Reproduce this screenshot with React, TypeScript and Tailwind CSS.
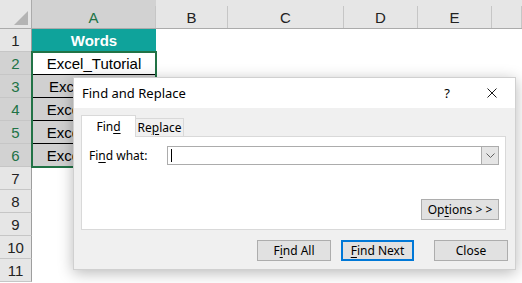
import * as React from "react";

const columns = [
  { label: "A", selected: true },
  { label: "B" },
  { label: "C" },
  { label: "D" },
  { label: "E" },
  { label: "" },
];

const rows = [1, 2, 3, 4, 5, 6, 7, 8, 9, 10, 11];

const words: Record<number, string> = {
  2: "Excel_Tutorial",
  3: "Excel Tutorial",
  4: "Excel_Tutorial",
  5: "Excel_Tutorial",
  6: "Excel_Tutorial",
};

function Ul({ children }: { children: React.ReactNode }) {
  return <span className="underline underline-offset-2">{children}</span>;
}

function DialogButton({
  children,
  focused,
  className,
}: {
  children: React.ReactNode;
  focused?: boolean;
  className?: string;
}) {
  return (
    <div
      className={
        "flex h-[21px] items-center justify-center bg-[#e1e1e1] " +
        (focused ? "border-2 border-[#0078d7] " : "border border-[#adadad] ") +
        (className ?? "")
      }
    >
      {children}
    </div>
  );
}

function FindReplaceDialog() {
  return (
    <div className="absolute left-[73px] top-[77px] flex h-[193px] w-[443px] flex-col border border-[#d0d0d0] bg-[#f0f0f0] font-['Noto_Sans',sans-serif] text-[12px] leading-none text-black shadow-[0_3px_14px_rgba(0,0,0,0.28)]">
      <div className="flex h-[30px] items-center bg-white pl-[8px]">
        <span className="text-[13px]">Find and Replace</span>
        <span className="ml-auto text-[13px]">?</span>
        <svg className="ml-[37px] mr-[18px]" width="10" height="10" viewBox="0 0 10 10">
          <path d="M0.5 0.5 L9.5 9.5 M9.5 0.5 L0.5 9.5" stroke="#1a1a1a" strokeWidth="1" fill="none" />
        </svg>
      </div>

      <div className="ml-[7px] mt-[7px] flex h-[21px] items-end">
        <div className="relative z-10 -mb-px flex h-[22px] w-[55px] items-center justify-center border border-b-0 border-[#d9d9d9] bg-white">
          Fin<Ul>d</Ul>
        </div>
        <div className="flex h-[18px] w-[48px] items-center justify-center border border-b-0 border-l-0 border-[#d9d9d9] bg-[#f0f0f0]">
          Re<Ul>p</Ul>lace
        </div>
      </div>

      <div className="ml-[7px] flex h-[94px] w-[425px] flex-col border border-[#d9d9d9] bg-white pl-[7px] pr-[6px]">
        <div className="mt-[9px] flex h-[19px] items-center">
          <span className="w-[78px]">
            Fi<Ul>n</Ul>d what:
          </span>
          <div className="flex h-[19px] flex-1 items-center border border-[#acacac] bg-white">
            <div className="ml-[3px] h-[13px] w-px bg-black" />
            <div className="ml-auto flex h-full w-[17px] items-center justify-center border-l border-[#acacac] bg-[#e5e5e5]">
              <svg width="9" height="5" viewBox="0 0 9 5">
                <path d="M0.5 0.5 L4.5 4.5 L8.5 0.5" stroke="#606060" strokeWidth="1" fill="none" />
              </svg>
            </div>
          </div>
        </div>
        <div className="mt-[34px] flex justify-end">
          <DialogButton className="w-[78px]">
            Op<Ul>t</Ul>ions &gt; &gt;
          </DialogButton>
        </div>
      </div>

      <div className="mt-[10px] flex justify-end pr-[7px]">
        <DialogButton className="w-[74px]">
          F<Ul>i</Ul>nd All
        </DialogButton>
        <DialogButton focused className="ml-[10px] w-[73px]">
          <Ul>F</Ul>ind Next
        </DialogButton>
        <DialogButton className="ml-[20px] w-[74px]">Close</DialogButton>
      </div>
    </div>
  );
}

export default function App() {
  return (
    <div className="relative h-[283px] w-[522px] overflow-hidden bg-white font-['Liberation_Sans',Arial,sans-serif] text-[15px] leading-none text-[#222]">
      <div className="grid grid-cols-[32px_124px_72px_116px_74px_74px_30px] grid-rows-[29px_repeat(11,23px)]">
        <div className="relative border-b border-r border-[#ababab] bg-[#e6e6e6]">
          <svg className="absolute bottom-[3px] right-[3px]" width="14" height="14" viewBox="0 0 14 14">
            <path d="M14 0 L14 14 L0 14 Z" fill="#b4b4b4" />
          </svg>
        </div>
        {columns.map((c, i) => (
          <div
            key={"h" + i}
            className={
              "flex items-end border-b border-[#ababab] " +
              (c.selected ? "bg-[#d2d2d2] text-[#217346]" : "bg-[#e6e6e6]")
            }
          >
            <div className="flex h-[22px] w-full items-center justify-center border-r border-[#c6c6c6]">
              {c.label}
            </div>
          </div>
        ))}

        {rows.map((r) => {
          const sel = r >= 2 && r <= 6;
          return (
            <React.Fragment key={r}>
              <div
                className={
                  "flex items-center justify-center border-b border-r border-b-[#c6c6c6] border-r-[#9e9e9e] " +
                  (sel ? "bg-[#d2d2d2] text-[#217346]" : "bg-[#e6e6e6]")
                }
              >
                {r}
              </div>
              {r === 1 ? (
                <div className="flex items-center justify-center bg-[#0fa39b] font-bold text-white">
                  Words
                </div>
              ) : sel ? (
                <div
                  className={
                    "flex items-center justify-center overflow-hidden whitespace-nowrap border-b border-black text-black " +
                    (r === 2 ? "bg-white" : "bg-[#d0d0d0]")
                  }
                >
                  {words[r]}
                </div>
              ) : (
                <div />
              )}
              <div />
              <div />
              <div />
              <div />
              <div />
            </React.Fragment>
          );
        })}
      </div>

      <div className="absolute left-[31px] top-[51px] h-[117px] w-[126px] border-2 border-[#217346]" />

      <FindReplaceDialog />
    </div>
  );
}
